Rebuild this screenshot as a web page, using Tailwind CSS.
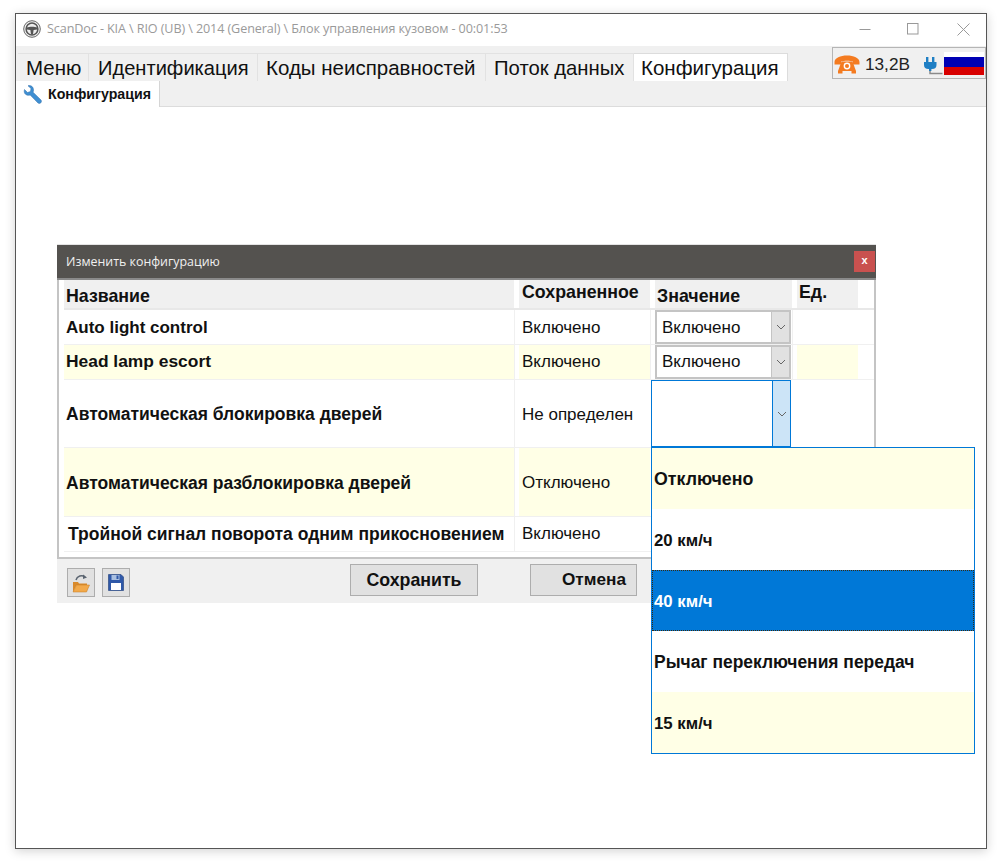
<!DOCTYPE html>
<html lang="ru">
<head>
<meta charset="utf-8">
<script src="https://cdn.jsdelivr.net/npm/@tailwindcss/browser@4"></script>
</head>
<body class="bg-white font-['Liberation_Sans',sans-serif] text-[#111]">
<div class="w-[1000px] h-[868px] pl-[15px] pt-[13px] overflow-hidden">
  <div class="relative w-[972px] h-[836px] bg-white border border-[#555] shadow-[0_2px_10px_rgba(0,0,0,0.18)] flex flex-col">
    <!-- title bar -->
    <div class="h-[32px] shrink-0 flex items-center pl-[7px] pb-[2px]">
      <svg class="w-[18px] h-[18px]" viewBox="0 0 18 18" fill="none">
        <circle cx="9" cy="9" r="8.3" fill="#eee" stroke="#666" stroke-width="1"/>
        <circle cx="9" cy="9" r="5.9" stroke="#555" stroke-width="1.5"/>
        <path d="M3.6 7.6 C6.5 6.4 11.5 6.4 14.4 7.6 L14.2 9.4 L10.6 10 L10 14.6 L8 14.6 L7.4 10 L3.8 9.4 Z" fill="#555"/>
      </svg>
      <span class="ml-[6px] font-['Open_Sans',sans-serif] text-[12.6px] text-[#9a9a9a] tracking-[-0.1px] whitespace-nowrap">ScanDoc - KIA \ RIO (UB) \ 2014 (General) \ Блок управления кузовом - 00:01:53</span>
      <div class="ml-auto flex items-center h-full">
        <svg class="w-[12px] h-[12px] mr-[36px]" viewBox="0 0 12 12"><path d="M0.5 6.5H11.5" stroke="#999" stroke-width="1"/></svg>
        <svg class="w-[12px] h-[12px] mr-[38px]" viewBox="0 0 12 12"><rect x="0.5" y="0.5" width="10.5" height="10.5" fill="none" stroke="#999" stroke-width="1"/></svg>
        <svg class="w-[13px] h-[13px] mr-[16px]" viewBox="0 0 13 13"><path d="M0.5 0.5L12.5 12.5M12.5 0.5L0.5 12.5" stroke="#999" stroke-width="1"/></svg>
      </div>
    </div>
    <!-- main tabs -->
    <div class="h-[35px] shrink-0 bg-[#f0f0f0] flex items-end pl-[2px] relative">
      <div class="flex items-stretch h-[28px] text-[20.5px] leading-[28px] text-[#111]">
        <div class="w-[71px] pl-[8px] border-t border-r border-[#e2e2e2] whitespace-nowrap">Меню</div>
        <div class="w-[169px] pl-[9px] border-t border-r border-[#e2e2e2] whitespace-nowrap text-[20.1px]">Идентификация</div>
        <div class="w-[228px] pl-[8px] border-t border-r border-[#e2e2e2] whitespace-nowrap">Коды неисправностей</div>
        <div class="w-[148px] pl-[8px] border-t border-r border-[#e2e2e2] whitespace-nowrap text-[20.3px]">Поток данных</div>
        <div class="w-[154px] pl-[7px] bg-white border-t border-r border-[#dcdcdc] whitespace-nowrap">Конфигурация</div>
      </div>
      <div class="absolute right-[0px] top-[1px] w-[154px] h-[32px] bg-[#f0f0f0] border border-[#b5b5b5] flex items-end pb-[2px] pl-[1px]">
        <svg class="w-[26px] h-[19px] mb-[2px]" viewBox="0 0 26 19">
          <path d="M0.5 7C0.5 3 6.5 0.5 13 0.5S25.5 3 25.5 7V9.5H19V6.5C16 5.6 10 5.6 7 6.5V9.5H0.5Z" fill="#f47b20"/>
          <path d="M7.5 6.5H18.5L22 16H4Z" fill="#f47b20"/>
          <circle cx="13" cy="11" r="3.4" fill="#fff"/><circle cx="13" cy="11" r="2" fill="#f47b20"/>
          <rect x="4" y="16" width="4.5" height="2.5" fill="#f47b20"/><rect x="17.5" y="16" width="4.5" height="2.5" fill="#f47b20"/>
        </svg>
        <span class="ml-[5px] text-[17.2px] leading-[20px] mb-[2px] text-[#222]">13,2В</span>
        <svg class="ml-[13px] w-[20px] h-[18px] mb-[1px]" viewBox="0 0 20 18" fill="none">
          <path d="M7 12V16.5H19.5" stroke="#8a8a8a" stroke-width="1.5"/>
          <rect x="3" y="0" width="2.4" height="5" fill="#1f7fc4"/><rect x="9" y="0" width="2.4" height="5" fill="#1f7fc4"/>
          <path d="M1 5H13.5V8Q13.5 12 9 12H5.5Q1 12 1 8Z" fill="#1f7fc4"/>
          <rect x="6" y="11" width="2.4" height="3" fill="#1f7fc4"/>
        </svg>
        <div class="ml-[1px] w-[40px] h-[23px] flex flex-col shrink-0 mb-[1px]">
          <div class="h-[5px] bg-white"></div>
          <div class="h-[10px] bg-[#0000b4]"></div>
          <div class="h-[8px] bg-[#d80000]"></div>
        </div>
      </div>
    </div>
    <!-- sub tab strip -->
    <div class="h-[26px] shrink-0 bg-[#f0f0f0] border-b border-[#dcdcdc] flex">
      <div class="w-[144px] h-[26px] bg-white border-r border-[#d5d5d5] flex items-center pl-[7px]">
        <svg class="w-[19px] h-[19px]" viewBox="0 0 19 19">
          <path d="M1.5 4.5L4.5 7.5L7.5 6.5L8 3.5L5 0.8C7.5 0 10.5 1.5 10.5 5C10.5 6 10.3 6.8 10 7.2L18 15C18.8 16 18.4 17.2 17.8 17.8C17 18.6 15.8 18.6 15 18L7.2 10C5 10.8 2.8 10 1.8 8.5C1.2 7.5 1 6 1.5 4.5Z" fill="#3f8fd2" stroke="#2a6ba8" stroke-width="0.5"/>
        </svg>
        <span class="ml-[6px] pt-[2px] text-[14.2px] font-bold text-[#111] whitespace-nowrap">Конфигурация</span>
      </div>
    </div>
    <!-- content -->
    <div class="relative flex-1 bg-white">
      <!-- modal -->
      <div class="absolute left-[41px] top-[137px] w-[819px] flex flex-col">
        <div class="h-[36px] bg-[#54524f] border-t border-[#e4e4e4] flex items-center pl-[9px] pr-[1px] border-b-2 border-b-[#8a8a8a]">
          <span class="font-['Open_Sans',sans-serif] text-[12.4px] text-[#f0f0f0] pt-[2px]">Изменить конфигурацию</span>
          <div class="ml-auto w-[21px] h-[21px] bg-[#c9514f] flex items-center justify-center text-white text-[11px] font-bold leading-none pb-[2px]">x</div>
        </div>
        <div class="border-x-2 border-[#c4c4c4] bg-white pl-[5px] h-[277px]">
          <!-- header row -->
          <div class="flex h-[30px] border-b-2 border-[#e8e8e8] text-[17.8px] font-bold">
            <div class="w-[450px] bg-[#f0f0f0] pl-[2px] pt-[6px] leading-[20px]">Название</div>
            <div class="w-[5px]"></div>
            <div class="w-[131px] bg-[#f0f0f0] pl-[3px] pt-[2px] leading-[20px] whitespace-nowrap">Сохраненное</div>
            <div class="w-[5px]"></div>
            <div class="w-[137px] bg-[#f0f0f0] pl-[2px] pt-[6px] leading-[20px]">Значение</div>
            <div class="w-[5px]"></div>
            <div class="w-[61px] bg-[#f0f0f0] pl-[2px] pt-[2px] leading-[20px]">Ед.</div>
          </div>
          <!-- row 1 -->
          <div class="flex h-[35px] items-stretch border-b border-[#f0f0f0] text-[17px]">
            <div class="w-[450px] pl-[2px] pt-[2px] font-bold flex items-center">Auto light control</div>
            <div class="w-[5px] border-l border-[#f0f0f0]"></div>
            <div class="w-[131px] pl-[3px] pt-[2px] flex items-center">Включено</div>
            <div class="w-[5px] border-l border-[#f0f0f0]"></div>
            <div class="w-[137px] flex items-stretch">
              <div class="w-[136px] flex border-2 border-[#c4c4c4] bg-white">
                <div class="flex-1 pl-[5px] pt-[2px] flex items-center">Включено</div>
                <div class="w-[18px] bg-[#e1e1e1] border-l border-[#c4c4c4] flex items-center justify-center">
                  <svg class="w-[10px] h-[6px]" viewBox="0 0 10 6" fill="none"><path d="M1 1L5 5L9 1" stroke="#666" stroke-width="1"/></svg>
                </div>
              </div>
            </div>
            <div class="w-[5px] border-l border-[#f0f0f0]"></div>
            <div class="w-[61px]"></div>
          </div>
          <!-- row 2 -->
          <div class="flex h-[35px] items-stretch border-b border-[#f0f0f0] text-[17px]">
            <div class="w-[450px] pl-[2px] pb-[2px] font-bold text-[17.4px] flex items-center bg-[#ffffe6]">Head lamp escort</div>
            <div class="w-[5px] border-l border-[#f0f0f0]"></div>
            <div class="w-[131px] pl-[3px] flex items-center bg-[#ffffe6]">Включено</div>
            <div class="w-[5px] border-l border-[#f0f0f0]"></div>
            <div class="w-[137px] flex items-stretch">
              <div class="w-[136px] flex border-2 border-[#c4c4c4] bg-white">
                <div class="flex-1 pl-[5px] flex items-center">Включено</div>
                <div class="w-[18px] bg-[#e1e1e1] border-l border-[#c4c4c4] flex items-center justify-center">
                  <svg class="w-[10px] h-[6px]" viewBox="0 0 10 6" fill="none"><path d="M1 1L5 5L9 1" stroke="#666" stroke-width="1"/></svg>
                </div>
              </div>
            </div>
            <div class="w-[5px] border-l border-[#f0f0f0]"></div>
            <div class="w-[61px] bg-[#ffffe6]"></div>
          </div>
          <!-- row 3 -->
          <div class="flex h-[68px] items-stretch border-b border-[#f0f0f0] text-[17px]">
            <div class="w-[450px] pl-[2px] pt-[2px] font-bold text-[17.5px] flex items-center">Автоматическая блокировка дверей</div>
            <div class="w-[5px] border-l border-[#f0f0f0]"></div>
            <div class="w-[132px] pl-[3px] pt-[2px] flex items-center">Не определен</div>
            <div class="w-[140px] flex border border-[#0078d7] bg-white">
              <div class="flex-1"></div>
              <div class="w-[18px] bg-[#cce4f7] border-l border-[#0078d7] flex items-center justify-center">
                <svg class="w-[10px] h-[6px]" viewBox="0 0 10 6" fill="none"><path d="M1 1L5 5L9 1" stroke="#666" stroke-width="1"/></svg>
              </div>
            </div>
            <div class="w-[61px] ml-[6px]"></div>
          </div>
          <!-- row 4 -->
          <div class="flex h-[69px] items-stretch border-b border-[#f0f0f0] text-[17px]">
            <div class="w-[450px] pl-[2px] pt-[2px] font-bold text-[17.5px] flex items-center bg-[#ffffe6]">Автоматическая разблокировка дверей</div>
            <div class="w-[5px] border-l border-[#f0f0f0]"></div>
            <div class="w-[131px] pl-[3px] pt-[2px] flex items-center bg-[#ffffe6]">Отключено</div>
          </div>
          <!-- row 5 -->
          <div class="flex h-[35px] items-stretch border-b border-[#f0f0f0] text-[17px]">
            <div class="w-[450px] pl-[4px] font-bold text-[17.5px] flex items-center whitespace-nowrap">Тройной сигнал поворота одним прикосновением</div>
            <div class="w-[5px] border-l border-[#f0f0f0]"></div>
            <div class="w-[131px] pl-[3px] flex items-center">Включено</div>
          </div>
        </div>
        <!-- footer -->
        <div class="h-[46px] bg-[#f0f0f0] border-t-2 border-[#c4c4c4] flex items-start pt-[5px] relative">
          <div class="ml-[10px] mt-[4px] w-[28px] h-[29px] bg-[#e1e1e1] border border-[#adadad] flex items-center justify-center">
            <svg class="w-[18px] h-[20px]" viewBox="0 0 18 20">
              <path d="M4 7C5 3 10 1.5 13 4" fill="none" stroke="#5a6470" stroke-width="1.5"/><path d="M11 1.5L15 4.5L11 6Z" fill="#5a6470"/>
              <path d="M1 9H6L7 10.5H15V12H4.5L1 19Z" fill="#d98a2b"/><path d="M4.5 12H17.5L14.5 19H1Z" fill="#f2a94a" stroke="#c57a20" stroke-width="0.5"/>
            </svg>
          </div>
          <div class="ml-[7px] mt-[4px] w-[28px] h-[29px] bg-[#e1e1e1] border border-[#adadad] flex items-center justify-center">
            <svg class="w-[16px] h-[17px]" viewBox="0 0 16 17">
              <path d="M0.5 0.5H13L15.5 3V16.5H0.5Z" fill="#2f58a8" stroke="#1f3c78" stroke-width="0.6"/>
              <rect x="3.5" y="1" width="8" height="5" fill="#a9bfe0"/><rect x="8.5" y="1.5" width="2" height="3.5" fill="#2f58a8"/>
              <rect x="3" y="9" width="10" height="7" fill="#fff"/>
            </svg>
          </div>
          <div class="ml-[220px] w-[128px] h-[32px] bg-[#e1e1e1] border border-[#adadad] flex items-center justify-center text-[17.75px] font-bold">Сохранить</div>
          <div class="ml-[52px] w-[107px] h-[32px] bg-[#e1e1e1] border border-[#adadad] flex items-center justify-end pr-[10px] text-[17.2px] font-bold">Отмена</div>
        </div>
        <!-- dropdown list -->
        <div class="absolute left-[594px] top-[203px] w-[324px] h-[307px] bg-white border border-[#0078d7] flex flex-col font-bold">
          <div class="h-[61px] bg-[#ffffe6] pl-[2px] pt-[2px] flex items-center text-[17.8px]">Отключено</div>
          <div class="h-[61px] bg-white pl-[2px] pt-[2px] flex items-center text-[16.8px]">20 км/ч</div>
          <div class="h-[61px] bg-[#0078d7] text-white pl-[1px] pt-[2px] flex items-center border border-dotted border-[#3a2a10] text-[16.8px]">40 км/ч</div>
          <div class="h-[61px] bg-white pl-[2px] pt-[2px] flex items-center text-[17.45px]">Рычаг переключения передач</div>
          <div class="flex-1 bg-[#ffffe6] pl-[2px] pt-[2px] flex items-center text-[16.8px]">15 км/ч</div>
        </div>
      </div>
    </div>
  </div>
</div>
</body>
</html>
